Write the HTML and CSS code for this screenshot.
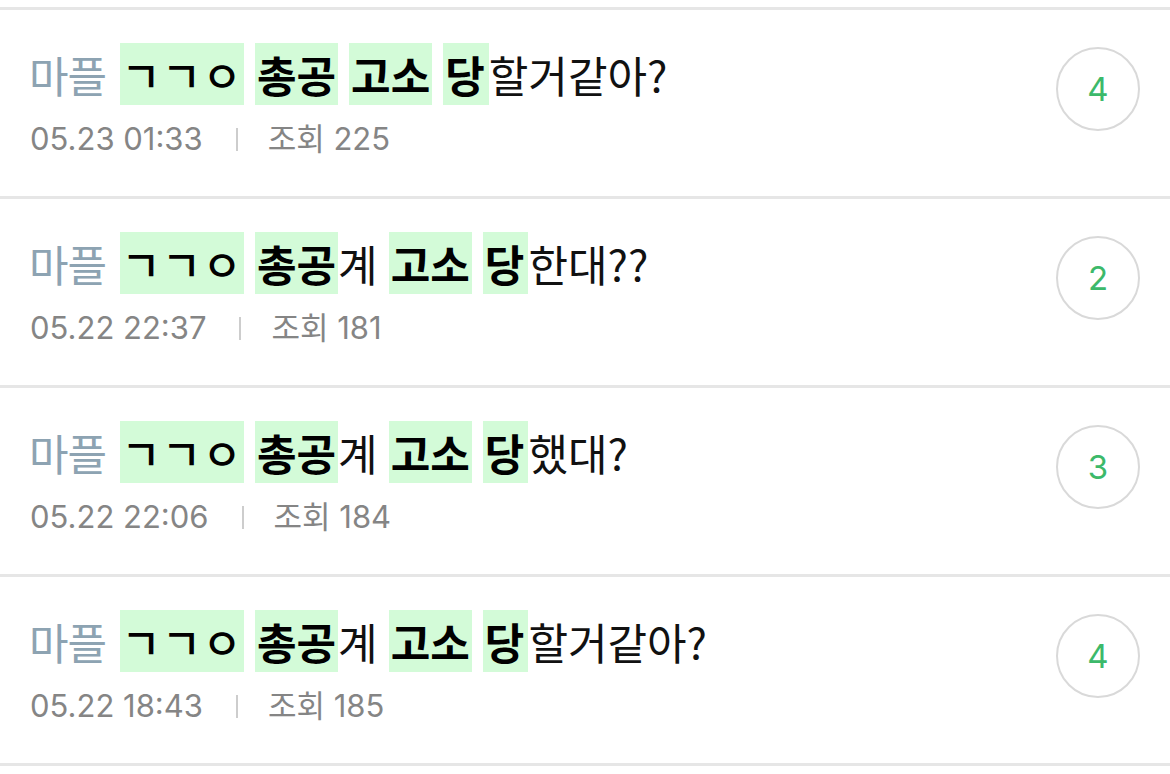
FILE: index.html
```html
<!DOCTYPE html>
<html lang="ko">
<head>
<meta charset="utf-8">
<link rel="stylesheet" href="styles.css">
</head>
<body>
<ul class="list">
  <li class="row">
    <div class="main">
      <div class="title"><span class="tag">마플</span> <span class="hl light">ㄱㄱㅇ</span> <span class="hl">총공</span> <span class="hl">고소</span> <span class="hl last">당</span>할거같아?</div>
      <div class="meta"><span>05.23 01:33</span><span class="sep"></span><span>조회 225</span></div>
    </div>
    <div class="count">4</div>
  </li>
  <li class="row">
    <div class="main">
      <div class="title"><span class="tag">마플</span> <span class="hl light">ㄱㄱㅇ</span> <span class="hl">총공</span>계 <span class="hl">고소</span> <span class="hl last">당</span>한대??</div>
      <div class="meta"><span>05.22 22:37</span><span class="sep"></span><span>조회 181</span></div>
    </div>
    <div class="count">2</div>
  </li>
  <li class="row">
    <div class="main">
      <div class="title"><span class="tag">마플</span> <span class="hl light">ㄱㄱㅇ</span> <span class="hl">총공</span>계 <span class="hl">고소</span> <span class="hl last">당</span>했대?</div>
      <div class="meta"><span>05.22 22:06</span><span class="sep"></span><span>조회 184</span></div>
    </div>
    <div class="count">3</div>
  </li>
  <li class="row">
    <div class="main">
      <div class="title"><span class="tag">마플</span> <span class="hl light">ㄱㄱㅇ</span> <span class="hl">총공</span>계 <span class="hl">고소</span> <span class="hl last">당</span>할거같아?</div>
      <div class="meta"><span>05.22 18:43</span><span class="sep"></span><span>조회 185</span></div>
    </div>
    <div class="count">4</div>
  </li>
</ul>
</body>
</html>
```

FILE: styles.css
```css
* { box-sizing: border-box; }
html, body { margin: 0; padding: 0; background: #fff; }
body { padding-top: 7px; font-family: "Noto Sans CJK KR", sans-serif; }
.list { list-style: none; margin: 0; padding: 0; border-top: 3px solid #e6e6e6; }
.row {
  display: flex;
  height: 189px;
  border-bottom: 3px solid #e6e6e6;
  padding: 33px 30px 0 29px;
}
.main { flex: 1; }
.title {
  font-size: 43px;
  line-height: 62px;
  height: 62px;
  color: #111;
  white-space: nowrap;
  word-spacing: -1px;
}
.tag { color: #8da3b2; letter-spacing: -1px; margin-right: 3px; }
.hl {
  display: inline-block;
  background: #d3fbd8;
  font-weight: 700;
  color: #000;
  padding: 0 2px;
  line-height: 62px;
  vertical-align: top;
  word-spacing: 0;
}
.hl.light { font-weight: 500; letter-spacing: 1px; padding: 0 1px; }
.hl.last { padding: 0 4px 0 2px; }
.meta {
  margin-top: 14px;
  font-family: "Inter", "Noto Sans CJK KR", sans-serif;
  font-size: 31px;
  line-height: 40px;
  color: #858585;
  display: flex;
  align-items: center;
  padding-left: 1px;
}
.sep {
  width: 2px;
  height: 23px;
  background: #cdcdcd;
  margin: 0 30px 0 33px;
}
.count {
  margin-top: 4px;
  width: 84px;
  height: 84px;
  border: 2px solid #d9d9d9;
  border-radius: 50%;
  display: flex;
  align-items: center;
  justify-content: center;
  font-family: "Inter", sans-serif;
  font-size: 33px;
  color: #3cb96a;
}
```
